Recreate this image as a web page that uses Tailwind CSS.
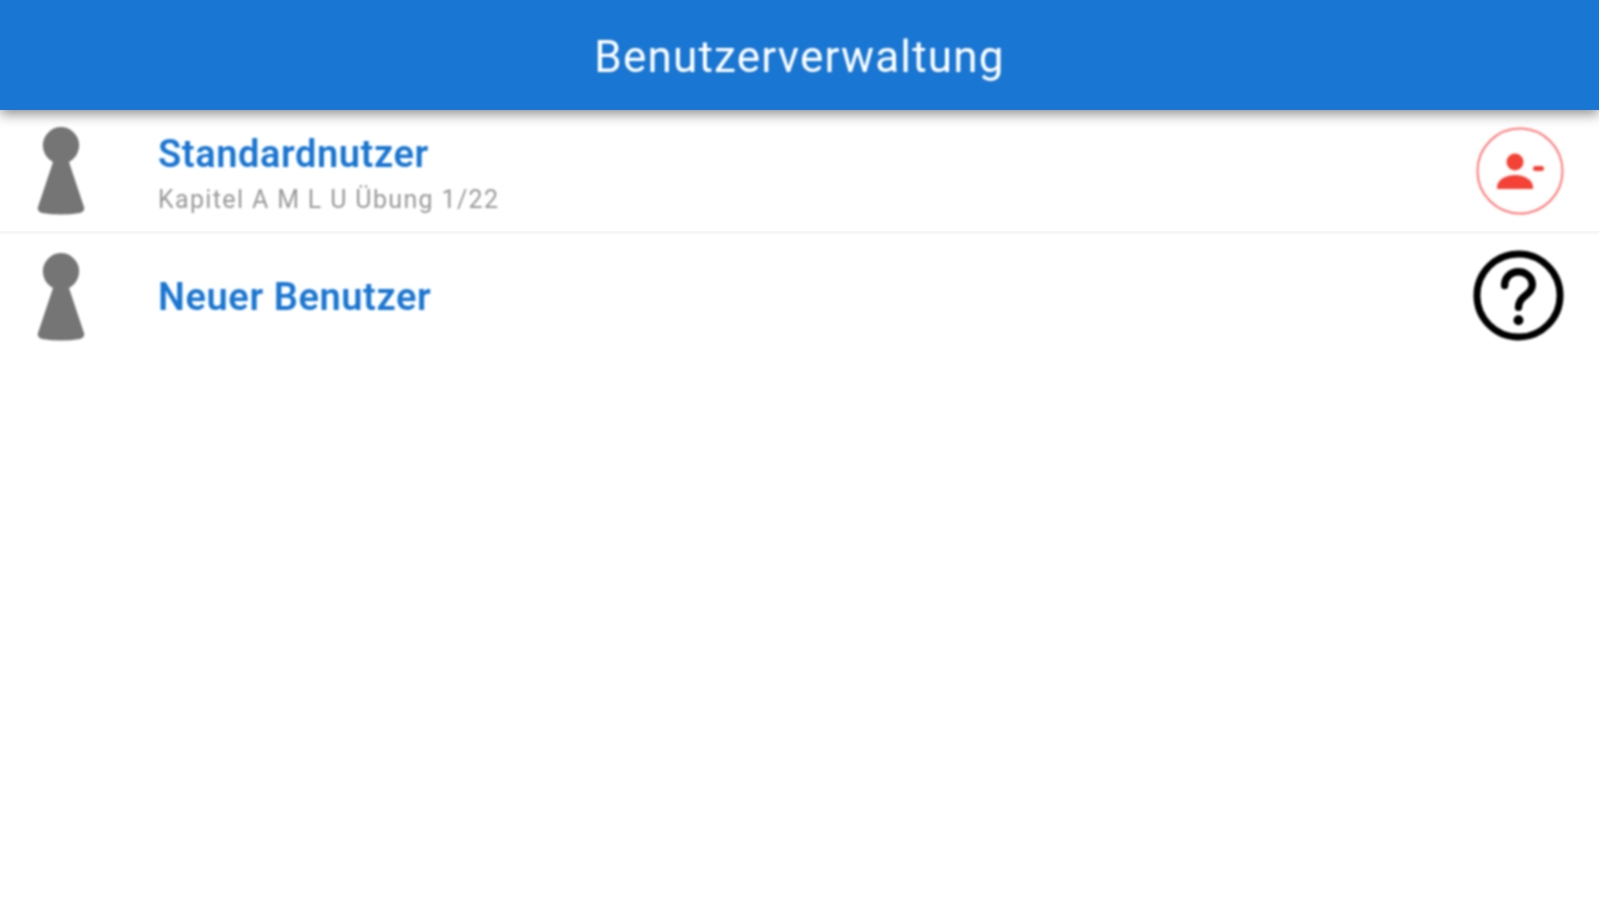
<!DOCTYPE html>
<html>
<head>
  <meta charset="utf-8">
  <title>Benutzerverwaltung</title>
  <script src="https://cdn.jsdelivr.net/npm/@tailwindcss/browser@4"></script>
</head>
<body class="bg-white min-h-screen overflow-hidden font-['Roboto',sans-serif]">
  <header class="relative z-10 h-[110px] bg-[#1976d2] flex items-center justify-center pt-1 shadow-[0_4px_12px_rgba(0,0,0,0.45)]">
    <h1 class="text-[44px] leading-none tracking-[1.2px] text-white blur-[1px]">Benutzerverwaltung</h1>
  </header>

  <div class="flex items-center h-[124px] border-b-[3px] border-[#f6f6f6] pl-[37px] pr-[35px]">
    <svg class="w-12 h-[88px] shrink-0 blur-[1px]" viewBox="0 0 48 88"><path fill="#757575" d="M24 0a18.500 18.500 0 0 1 8 35L47 80c1 3-1 5-4 6q-19 3-38 0c-3-1-5-3-4-6L16 35A18.500 18.500 0 0 1 24 0z"/></svg>
    <div class="ml-[73px] flex-1 flex flex-col pt-[6px] blur-[1px]">
      <span class="text-[38px] leading-[44px] tracking-[0.6px] font-semibold text-[#1976d2]">Standardnutzer</span>
      <span class="text-[25px] leading-[32px] tracking-[1.35px] mt-2 text-[#999999]">Kapitel A M L U Übung 1/22</span>
    </div>
    <svg class="w-[88px] h-[88px] shrink-0 blur-[1px]" viewBox="0 0 88 88">
      <circle cx="44" cy="44" r="42.500" fill="none" stroke="#f77" stroke-width="2"/>
      <circle cx="39" cy="35" r="8.500" fill="#f44336"/>
      <path fill="#f44336" d="M21 62c-1-10 10-14 18-14s19 4 18 14z"/>
      <rect x="57" y="39" width="11" height="5" rx="2.500" fill="#f44336"/>
    </svg>
  </div>

  <div class="flex items-center h-[126px] pl-[37px] pr-[35px]">
    <svg class="w-12 h-[88px] shrink-0 blur-[1px]" viewBox="0 0 48 88"><path fill="#757575" d="M24 0a18.500 18.500 0 0 1 8 35L47 80c1 3-1 5-4 6q-19 3-38 0c-3-1-5-3-4-6L16 35A18.500 18.500 0 0 1 24 0z"/></svg>
    <div class="ml-[73px] flex-1 blur-[1px]">
      <span class="text-[38px] leading-[44px] tracking-[0.6px] font-semibold text-[#1976d2]">Neuer Benutzer</span>
    </div>
    <svg class="w-[91px] h-[91px] shrink-0 mb-[4px] blur-[1px]" viewBox="0 0 92 92" fill="none">
      <circle cx="46" cy="46" r="42" stroke="#000" stroke-width="7"/>
      <path stroke="#000" stroke-width="7.500" stroke-linecap="round" d="M32 36c0-8 6-14 14-14s14 6 14 13c0 5-3 8-7 11c-4 3-7 6-7 12"/>
      <circle cx="46" cy="71" r="5" fill="#000"/>
    </svg>
  </div>
</body>
</html>
